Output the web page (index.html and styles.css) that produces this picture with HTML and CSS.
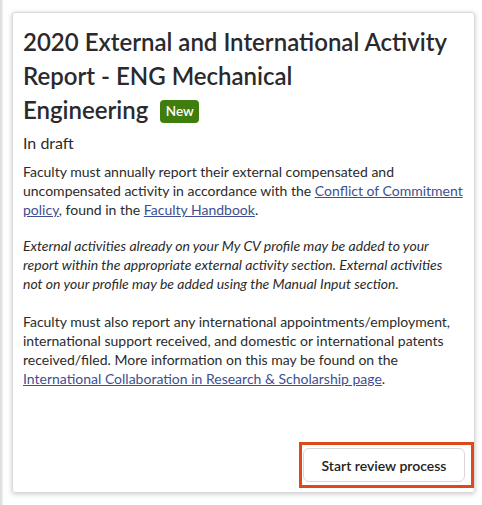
FILE: index.html
```html
<!DOCTYPE html>
<html>
<head>
<meta charset="utf-8">
<link rel="stylesheet" href="styles.css">
</head>
<body>
<div class="edge"></div>
<div class="card">
  <div class="content">
    <h1 class="title">2020 External and International Activity Report - ENG Mechanical <span class="nowrap">Engineering<span class="badge">New</span></span></h1>
    <div class="status">In draft</div>
    <p class="para first">Faculty must annually report their external compensated and uncompensated activity in accordance with the <a href="#">Conflict of Commitment policy</a>, found in the <a href="#">Faculty Handbook</a>.</p>
    <p class="para italic">External activities already on your My CV profile may be added to your report within the appropriate external activity section. External activities not on your profile may be added using the Manual Input section.</p>
    <p class="para last">Faculty must also report any international appointments/employment, international support received, and domestic or international patents received/filed. More information on this may be found on the <a href="#">International Collaboration in Research &amp; Scholarship page</a>.</p>
  </div>
  <div class="actions">
    <button class="btn">Start review process</button>
  </div>
</div>
<div class="highlight"></div>
</body>
</html>
```
FILE: styles.css
```css
html, body {
  margin: 0;
  padding: 0;
  background: #ffffff;
}
body {
  font-family: "Lato", "Open Sans", sans-serif;
  color: #2b2b2b;
  width: 482px;
  height: 505px;
  position: relative;
  overflow: hidden;
}
.edge {
  position: absolute;
  left: 0;
  top: 0;
  width: 3px;
  height: 505px;
  background: linear-gradient(to right, #d8d8d8, #f2f2f2);
}
.card {
  margin: 12px 0 0 12px;
  width: 463px;
  height: 481px;
  box-sizing: border-box;
  border: 1px solid #d9d9d9;
  border-radius: 3px;
  box-shadow: 0 1px 5px rgba(0, 0, 0, 0.22);
  padding: 12px 9px 10px 10px;
  display: flex;
  flex-direction: column;
}
.content {
  flex: 1;
}
.title {
  margin: 0;
  font-size: 24px;
  line-height: 34px;
  font-weight: 600;
  color: #2a2a2e;
}
.nowrap {
  white-space: nowrap;
}
.badge {
  display: inline-block;
  background: #3f7d0c;
  color: #ffffff;
  font-size: 13.5px;
  font-weight: 600;
  line-height: 23px;
  width: 39px;
  text-align: center;
  border-radius: 4px;
  vertical-align: 3px;
  margin-left: 12px;
}
.status {
  font-size: 16px;
  line-height: 22px;
  margin-top: 5px;
  color: #2b2b2b;
}
.para {
  margin: 0;
  font-size: 14px;
  line-height: 19px;
  color: #2b2b2b;
}
.para.first {
  margin-top: 8px;
}
.para.italic {
  margin-top: 17px;
  font-style: italic;
}
.para.last {
  margin-top: 19px;
}
.para a {
  color: #3e4f90;
  text-decoration: underline;
}
.actions {
  display: flex;
  justify-content: flex-end;
}
.btn {
  width: 162px;
  height: 34px;
  background: #ffffff;
  border: 1px solid #d8d8d8;
  border-radius: 6px;
  font-family: inherit;
  font-size: 14px;
  font-weight: 600;
  color: #222;
}
.highlight {
  position: absolute;
  left: 299px;
  top: 442px;
  width: 175px;
  height: 46px;
  box-sizing: border-box;
  border: 3px solid #dc4a1a;
}
```
